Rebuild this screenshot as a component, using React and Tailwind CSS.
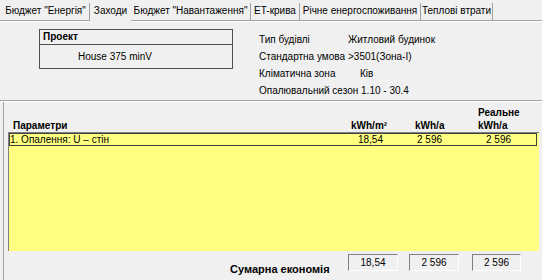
export default function App() {
  const tabs = [
    { label: 'Бюджет "Енергія"', w: 'w-[88px]' },
    { label: 'Заходи', w: 'w-[41px]', sel: true },
    { label: 'Бюджет "Навантаження"', w: 'w-[120px]' },
    { label: 'ET-крива', w: 'w-[49px]' },
    { label: 'Річне енергоспоживання', w: 'w-[121px]' },
    { label: 'Теплові втрати', w: 'w-[72px]' },
  ];
  const box = 'h-[17px] border-t border-l border-[#808080] border-r border-b border-r-white border-b-white flex items-center justify-center';
  return (
    <div className="w-[542px] h-[280px] bg-[#f0f0f0] overflow-hidden text-[10px] leading-none text-black whitespace-nowrap font-['Liberation_Sans',Arial,sans-serif]">
      <div className="flex items-end h-[20px] pl-[2px]">
        {tabs.map((t) =>
          t.sel ? (
            <div key={t.label} className={`${t.w} h-[20px] flex items-start justify-center pt-[4px] bg-[#f0f0f0] relative z-10 -mb-[2px]`}>
              {t.label}
            </div>
          ) : (
            <div key={t.label} className={`${t.w} h-[17px] flex items-center justify-center border-r border-[#a0a0a0] pb-[1px]`}>
              {t.label}
            </div>
          )
        )}
      </div>
      <div className="border-t border-[#a0a0a0] h-[260px] flex flex-col">
        <div className="border-t border-white flex h-[79px] pt-[7px]">
          <div className="ml-[39px] w-[194px] h-[40px] border border-[#505050] flex flex-col">
            <div className="h-[15px] border-b border-[#505050] flex items-center pl-[3px] font-bold">Проект</div>
            <div className="flex-1 flex items-center pl-[38px]">House 375 minV</div>
          </div>
          <div className="ml-[26px] mt-[5px] flex flex-col gap-[6px]">
            <div className="flex h-[11px] items-center"><span className="w-[89px]">Тип будівлі</span><span>Житловий будинок</span></div>
            <div className="flex h-[11px] items-center"><span className="w-[89px]">Стандартна умова</span><span>&gt;3501(Зона-І)</span></div>
            <div className="flex h-[11px] items-center"><span className="w-[101px]">Кліматична зона</span><span>Ків</span></div>
            <div className="flex h-[11px] items-center"><span>Опалювальний сезон 1.10 - 30.4</span></div>
          </div>
        </div>
        <div className="border-t border-[#a0a0a0]"></div>
        <div className="border-t border-white flex-1 flex flex-col pl-[3px]">
          <div className="flex-1 border-l border-[#a0a0a0] flex flex-col">
            <div className="h-[30px] relative font-bold">
              <span className="absolute left-[9px] top-[19px]">Параметри</span>
              <span className="absolute left-[347px] top-[19px]">kWh/m²</span>
              <span className="absolute left-[411px] top-[19px]">kWh/a</span>
              <span className="absolute left-[474px] top-[6px]">Реальне</span>
              <span className="absolute left-[474px] top-[19px]">kWh/a</span>
            </div>
            <div className="ml-[4px] w-[531px] h-[119px] bg-[#ffff80] border-l border-t border-[#808080]">
              <div className="h-[13px] w-[528px] border border-[#404040] relative">
                <span className="absolute left-[0px] top-[1px]">1. Опалення: U – стін</span>
                <span className="absolute right-[153px] top-[1px]">18,54</span>
                <span className="absolute left-[407px] top-[1px]">2 596</span>
                <span className="absolute left-[476px] top-[1px]">2 596</span>
              </div>
            </div>
            <div className="flex items-start mt-[3px]">
              <span className="ml-[226px] mt-[10px] font-bold text-[11px] w-[118px]">Сумарна економія</span>
              <div className={`w-[50px] ${box}`}>18,54</div>
              <div className={`ml-[11px] w-[50px] ${box}`}>2 596</div>
              <div className={`ml-[13px] w-[49px] ${box}`}>2 596</div>
            </div>
          </div>
        </div>
      </div>
    </div>
  );
}
